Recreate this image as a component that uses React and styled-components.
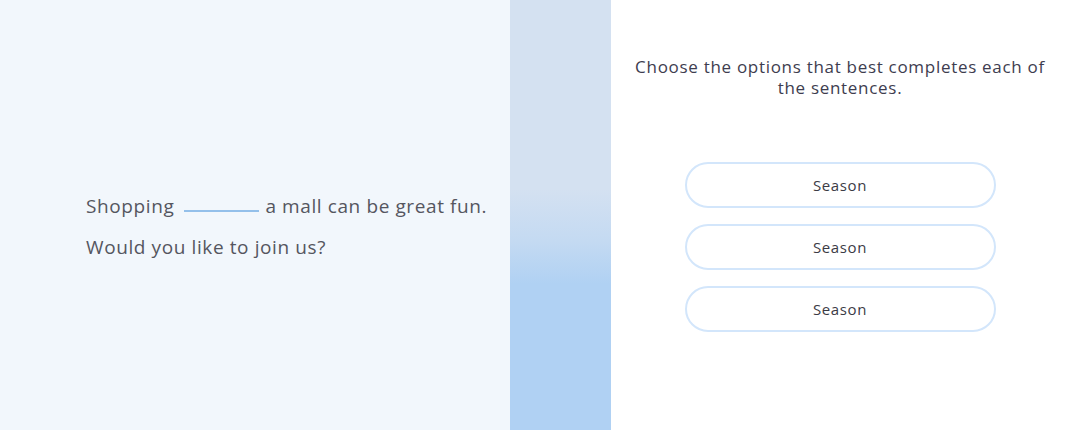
import React from 'react';
import styled, { createGlobalStyle } from 'styled-components';

const GlobalStyle = createGlobalStyle`
  html, body {
    margin: 0;
    padding: 0;
    background: #ffffff;
  }
  body {
    font-family: "Open Sans", "Noto Sans", sans-serif;
  }
`;

const options = ['Season', 'Season', 'Season'];

const App = () => {
  return (
    <>
      <GlobalStyle />
      <Page>
        <SentencePanel>
          <Sentences>
            <Line>
              Shopping <Blank /> a mall can be great fun.
            </Line>
            <Line>Would you like to join us?</Line>
          </Sentences>
        </SentencePanel>
        <Stripe />
        <QuestionPanel>
          <Prompt>Choose the options that best completes each of the sentences.</Prompt>
          <Options>
            {options.map((label, i) => (
              <Option key={i} type="button">{label}</Option>
            ))}
          </Options>
        </QuestionPanel>
      </Page>
    </>
  );
};

export default App;

const Page = styled.div`
  display: flex;
  width: 100%;
  height: 430px;
`;

const SentencePanel = styled.div`
  width: 510px;
  flex-shrink: 0;
  background: #f2f7fc;
  display: flex;
  align-items: center;
  padding: 22px 0 0 86px;
  box-sizing: border-box;
`;

const Sentences = styled.div`
  display: flex;
  flex-direction: column;
  gap: 15px;
`;

const Line = styled.p`
  margin: 0;
  font-size: 19px;
  line-height: 26px;
  letter-spacing: 0.6px;
  color: #55565f;
  white-space: nowrap;
`;

const Blank = styled.span`
  display: inline-block;
  width: 75px;
  height: 2px;
  margin: 0 1px 0 4px;
  background: #94c0ea;
  vertical-align: 1px;
`;

const Stripe = styled.div`
  width: 101px;
  flex-shrink: 0;
  background: linear-gradient(
    to bottom,
    #d4e1f1 0%,
    #d4e1f1 44%,
    #c4daf2 56%,
    #b0d1f3 66%,
    #b0d1f3 100%
  );
`;

const QuestionPanel = styled.div`
  flex: 1;
  display: flex;
  flex-direction: column;
  align-items: center;
  padding: 56px 0 0 2px;
  background: #ffffff;
`;

const Prompt = styled.p`
  margin: 0;
  width: 440px;
  text-align: center;
  font-size: 17px;
  line-height: 21px;
  letter-spacing: 0.7px;
  color: #3e3d4f;
`;

const Options = styled.div`
  display: flex;
  flex-direction: column;
  gap: 16px;
  margin-top: 64px;
`;

const Option = styled.button`
  width: 311px;
  height: 46px;
  border: 2px solid #d3e6fb;
  border-radius: 23px;
  background: #ffffff;
  font-family: "Open Sans", "Noto Sans", sans-serif;
  font-size: 15px;
  letter-spacing: 0.6px;
  color: #3b3b45;
  cursor: pointer;
`;
